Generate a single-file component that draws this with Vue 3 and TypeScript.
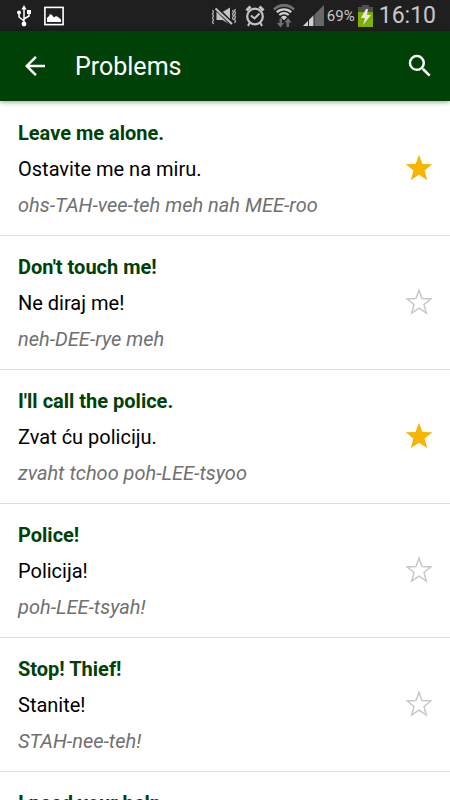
<script setup lang="ts">
import { ref } from 'vue'

interface Phrase {
  id: number
  english: string
  croatian: string
  spoken: string
  starred: boolean
}

const phrases = ref<Phrase[]>([
  { id: 1, english: 'Leave me alone.', croatian: 'Ostavite me na miru.', spoken: 'ohs-TAH-vee-teh meh nah MEE-roo', starred: true },
  { id: 2, english: "Don't touch me!", croatian: 'Ne diraj me!', spoken: 'neh-DEE-rye meh', starred: false },
  { id: 3, english: "I'll call the police.", croatian: 'Zvat ću policiju.', spoken: 'zvaht tchoo poh-LEE-tsyoo', starred: true },
  { id: 4, english: 'Police!', croatian: 'Policija!', spoken: 'poh-LEE-tsyah!', starred: false },
  { id: 5, english: 'Stop! Thief!', croatian: 'Stanite!', spoken: 'STAH-nee-teh!', starred: false },
  { id: 6, english: 'I need your help.', croatian: '', spoken: '', starred: false },
])

function toggle(phrase: Phrase): void {
  phrase.starred = !phrase.starred
}
</script>

<template>
  <div class="screen">
    <div class="status">
      <div class="status-group left">
        <svg width="16" height="24" viewBox="0 0 16 24" aria-hidden="true">
          <path d="M8 4v16M3 9v4l5 4M13 8v4l-5 3" fill="none" stroke="#fff" stroke-width="1.5" />
          <path d="M8 1l2.600 4.500H5.400zM11 6h4v4h-4z" fill="#fff" />
          <circle cx="3" cy="8.500" r="2" fill="#fff" />
          <circle cx="8" cy="20" r="2.400" fill="#fff" />
        </svg>
        <svg width="20" height="20" viewBox="0 0 20 20" aria-hidden="true">
          <rect x="0.9" y="1.4" width="18.2" height="17.2" fill="none" stroke="#fff" stroke-width="1.6" />
          <path d="M3 16v-4l2-2 1-2 2 1 2 2.500 2-1.500 2 1 3 2.500V16z" fill="#fff" />
        </svg>
      </div>
      <div class="status-group right">
        <svg width="26" height="20" viewBox="0 0 26 20" aria-hidden="true">
          <path d="M5.500 6h6l7.500-4.500v17L11.500 14h-6z" fill="#c4c4c4" />
          <path d="M4 1l18 18" stroke="#1f1f1f" stroke-width="4.500" />
          <path d="M4.500 2.500l16.500 15.500" stroke="#c4c4c4" stroke-width="2" />
          <path d="M1.500 4l1 2-1 2 1 2-1 2 1 2-1 2 1 2M21.500 4l1 2-1 2 1 2-1 2 1 2M24.500 3l-1 2 1 2-1 2 1 2-1 2 1 2-1 2" fill="none" stroke="#b0b0b0" stroke-width="1.300" />
        </svg>
        <svg width="20" height="22" viewBox="0 0 20 22" aria-hidden="true">
          <circle cx="10" cy="11.500" r="7.800" fill="none" stroke="#c4c4c4" stroke-width="2.200" />
          <path d="M1.500 5.500l4-4M18.500 5.500l-4-4" stroke="#c4c4c4" stroke-width="3" />
          <path d="M6 10.500l3.500 3 5-5M4.500 18L3 21M15.500 18l1.500 3" fill="none" stroke="#c4c4c4" stroke-width="2" />
        </svg>
        <svg width="22" height="24" viewBox="0 0 22 24" aria-hidden="true">
          <path d="M1 5.500a14 14 0 0 1 20 0" fill="none" stroke="#707070" stroke-width="3" />
          <path d="M3.800 8.300a10.500 10.500 0 0 1 14.400 0M6.300 11a7 7 0 0 1 9.400 0" fill="none" stroke="#d0d0d0" stroke-width="2.200" />
          <path d="M8 13.200a4.500 4.500 0 0 1 6 0l-3 3z" fill="#d0d0d0" />
          <path d="M6.500 14.500h2.500v4.500h2l-3.500 4.500L4 19h2.500zM16 23h-2.500v-4.500h-2L15 14l3.500 4.500H16z" fill="#707070" />
        </svg>
        <svg class="signal" width="21" height="21" viewBox="0 0 21 21" aria-hidden="true">
          <path d="M0 21L21 0v21z" fill="#686868" />
          <path d="M0 21L11 10v11z" fill="#d0d0d0" />
          <path d="M5.500 13v8M11 8v13" stroke="#1f1f1f" stroke-width="1" />
        </svg>
        <span class="percent">69%</span>
        <svg width="15" height="22" viewBox="0 0 15 22" aria-hidden="true">
          <path d="M0 2h4V0h7v2h4v20H0z" fill="#505050" />
          <path d="M0 7h15v15H0z" fill="#7fb000" />
          <path d="M8 4L3 13h4l-2 7 8-10H9l1-6z" fill="#e8e8e8" />
        </svg>
        <time class="clock">16:10</time>
      </div>
    </div>

    <header class="bar">
      <button class="icon-button" type="button" aria-label="Back">
        <svg width="30" height="30" viewBox="0 0 24 24" aria-hidden="true">
          <path d="M20 11H7.830l5.590-5.590L12 4l-8 8 8 8 1.410-1.410L7.830 13H20v-2z" fill="#fff" />
        </svg>
      </button>
      <h1 class="title">Problems</h1>
      <button class="icon-button" type="button" aria-label="Search">
        <svg width="30" height="30" viewBox="0 0 24 24" aria-hidden="true">
          <path d="M15.500 14h-.790l-.280-.270A6.471 6.471 0 0 0 16 9.500 6.500 6.500 0 1 0 9.500 16c1.610 0 3.090-.590 4.230-1.570l.270.280v.790l5 4.990L20.490 19l-4.990-5zm-6 0C7.010 14 5 11.990 5 9.500S7.010 5 9.500 5 14 7.010 14 9.500 11.990 14 9.500 14z" fill="#fff" />
        </svg>
      </button>
    </header>

    <ul class="list">
      <li v-for="phrase in phrases" :key="phrase.id" class="row">
        <div class="text">
          <h2 class="english">{{ phrase.english }}</h2>
          <p class="croatian" lang="hr">{{ phrase.croatian }}</p>
          <p class="spoken">{{ phrase.spoken }}</p>
        </div>
        <button
          class="icon-button"
          type="button"
          aria-label="Favourite"
          :aria-pressed="phrase.starred"
          @click="toggle(phrase)"
        >
          <svg width="32" height="32" viewBox="0 0 32 32" aria-hidden="true">
            <path
              v-if="phrase.starred"
              d="M16 1.700l3.400 9.200 9.900.400-7.700 6.200 2.700 9.800L16 21.800l-8.300 5.500 2.700-9.800-7.700-6.200 9.900-.400z"
              fill="#f7b500"
            />
            <path
              v-else
              d="M16 3.200l3 8.400 8.800.400-6.800 5.500 2.300 8.600L16 21.200l-7.300 4.900 2.300-8.600L4.200 12l8.800-.400z"
              fill="none"
              stroke="#c8c8c8"
              stroke-width="1.500"
            />
          </svg>
        </button>
      </li>
    </ul>
  </div>
</template>

<style>
body {
  margin: 0;
  background: #fff;
}
</style>

<style scoped>
.screen {
  display: flex;
  flex-direction: column;
  height: 100vh;
  overflow: hidden;
  background: #fff;
  color: #000;
  font-family: Roboto, "Noto Sans", sans-serif;
}

.status {
  display: flex;
  flex: none;
  align-items: center;
  justify-content: space-between;
  height: 31px;
  padding: 0 14px 0 16px;
  background: #1f1f1f;
  color: #c8c8c8;
}

.status-group {
  display: flex;
  align-items: center;
}

.left {
  gap: 12px;
}

.right {
  gap: 8px;
}

.percent {
  margin: 0 -5px;
  font-size: 15px;
}

.clock {
  margin-left: -2px;
  font-size: 23px;
}

.bar {
  position: relative;
  display: flex;
  flex: none;
  align-items: center;
  height: 70px;
  padding: 0 15px 0 20px;
  background: #004107;
  box-shadow: 0 1px 5px rgba(0, 0, 0, 0.4);
}

.title {
  flex: 1;
  margin: 0 0 0 25px;
  color: #fff;
  font-size: 25px;
  font-weight: 400;
}

.icon-button {
  display: block;
  flex: none;
  padding: 0;
  border: 0;
  background: none;
  cursor: pointer;
}

.icon-button svg {
  display: block;
}

.list {
  flex: 1;
  min-height: 0;
  margin: 0;
  padding: 1px 0 0;
  overflow: hidden;
  list-style: none;
}

.row {
  display: flex;
  align-items: center;
  padding: 13px 15px 12px 18px;
  border-bottom: 1px solid #dedede;
}

.text {
  flex: 1;
  min-width: 0;
}

.english,
.croatian,
.spoken {
  min-height: 36px;
  margin: 0;
  font-size: 20px;
  font-weight: 400;
  line-height: 36px;
}

.english {
  color: #004107;
  font-weight: 700;
}

.spoken {
  color: #707070;
  font-style: italic;
}
</style>
